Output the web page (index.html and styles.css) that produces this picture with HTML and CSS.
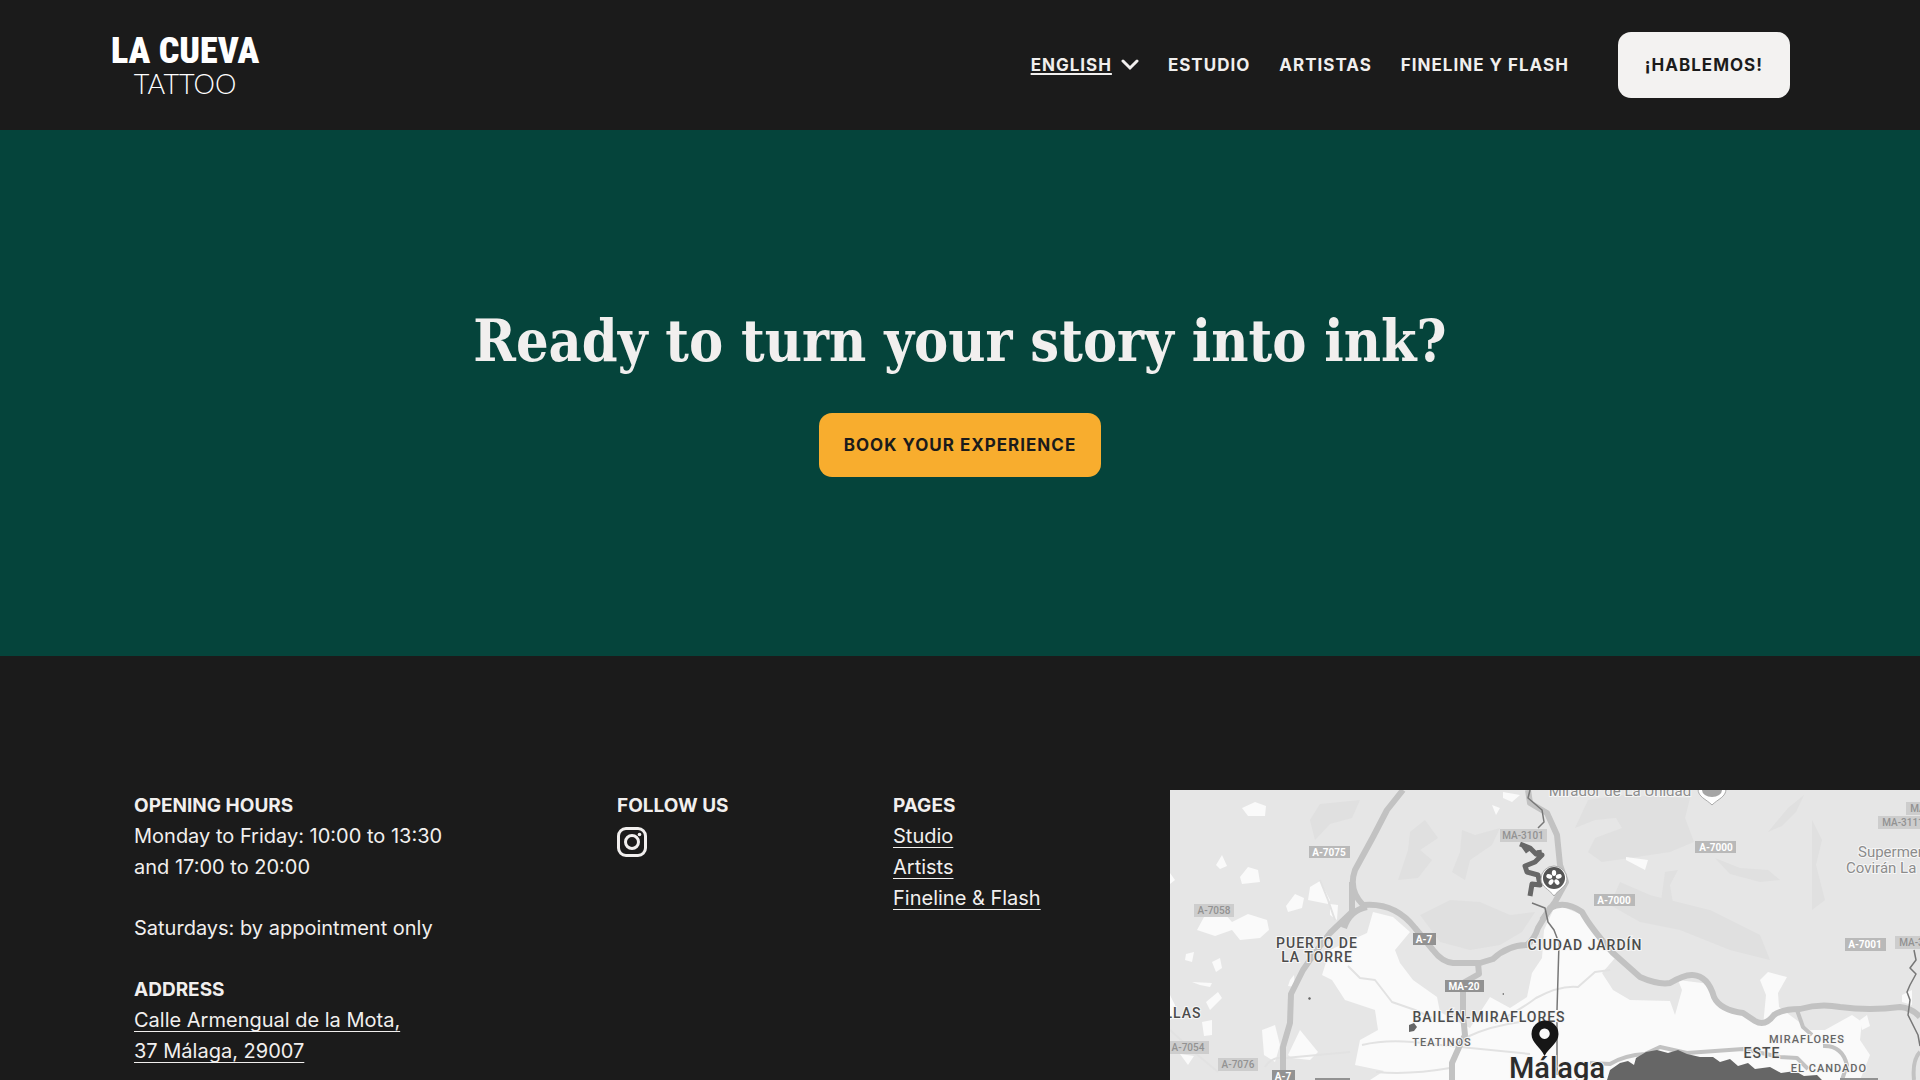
FILE: index.html
```html
<!DOCTYPE html>
<html lang="en">
<head>
  <meta charset="UTF-8" />
  <meta name="viewport" content="width=device-width, initial-scale=1" />
  <title>La Cueva Tattoo</title>
  <link rel="stylesheet" href="styles.css">
</head>
<body>

  <header class="header">
    <a class="logo" href="#">
      <span class="logo-name">LA CUEVA</span>
      <span class="logo-sub">TATTOO</span>
    </a>
    <nav class="nav">
      <button class="lang" type="button">
        <span>ENGLISH</span>
        <svg width="18" height="12" viewBox="0 0 18 12" aria-hidden="true"><path d="M2 2l7 7 7-7" /></svg>
      </button>
      <a href="#">ESTUDIO</a>
      <a href="#">ARTISTAS</a>
      <a href="#">FINELINE Y FLASH</a>
    </nav>
    <a class="btn btn-light" href="#">¡HABLEMOS!</a>
  </header>

  <main class="cta">
    <h1>Ready to turn your story into ink?</h1>
    <a class="btn btn-yellow" href="#">BOOK YOUR EXPERIENCE</a>
  </main>

  <footer class="footer">
    <div class="col">
      <h2>OPENING HOURS</h2>
      <p>Monday to Friday: 10:00 to 13:30<br>and 17:00 to 20:00</p>
      <p class="spaced">Saturdays: by appointment only</p>
      <h2>ADDRESS</h2>
      <p><a href="#">Calle Armengual de la Mota,<br>37 Málaga, 29007</a></p>
    </div>

    <div class="col">
      <h2>FOLLOW US</h2>
      <a class="social" href="#" aria-label="Instagram">
        <svg width="30" height="30" viewBox="0 0 30 30">
          <rect x="1.500" y="1.500" width="27" height="27" rx="7.500" />
          <circle cx="15" cy="15" r="6.500" />
          <circle class="dot" cx="22.500" cy="7.500" r="1.800" />
        </svg>
      </a>
    </div>

    <div class="col">
      <h2>PAGES</h2>
      <ul>
        <li><a href="#">Studio</a></li>
        <li><a href="#">Artists</a></li>
        <li><a href="#">Fineline &amp; Flash</a></li>
      </ul>
    </div>

    <div class="map">
      <svg viewBox="0 0 750 290" preserveAspectRatio="xMidYMin slice" role="img" aria-label="Map of Málaga">
        <rect class="land" width="750" height="290" />

        <!-- hills -->
        <g class="hills">
          <path d="M405 38L418 10 450 5 520 8 515 28 524 52 500 62 460 68 432 72 418 62 425 48 452 38 446 28 425 30z" />
          <path d="M292 40L305 45 330 38 322 55 300 70 295 90 282 82 290 62z" />
          <path d="M545 68L570 78 598 80 610 90 590 92 560 84z" />
          <path d="M495 82L508 80 500 95 505 125 490 118z" />
          <path d="M634 5L626 22 612 36 598 42 618 18z" />
          <path d="M642 30L652 50 646 75 655 110 642 120z" />
          <path d="M255 30L268 48 250 60 262 70 248 88 228 90 238 60 240 42z" />
          <path d="M450 92L480 105 540 120 590 145 600 170 560 160 510 140 470 132 440 115z" />
          <path d="M250 125L280 110 310 112 340 125 365 122 352 142 330 155 300 160 270 152z" />
          <path d="M150 14L190 10 182 28 160 34 145 50 140 30z" />
        </g>

        <!-- built-up areas -->
        <g class="town">
          <path d="M197 143L203 122 223 127 240 142 225 160 230 173 243 190 267 207 270 222 300 238 320 207 340 218 357 207 362 183 372 168 374 140 386 114 410 124 425 145 445 168 432 183 443 200 460 210 500 211 505 225 512 200 508 190 540 194 555 220 575 224 593 236 596 205 590 190 598 182 617 187 608 203 609 217 640 240 655 240 682 225 692 232 690 250 700 265 690 290 200 290 214 281 185 275 190 250 208 240 205 220 175 210 162 190 152 185 160 160z" />
          <path d="M27 140L34 127 55 124 62 132 78 124 97 130 99 140 90 148 70 150 62 140 45 146z" />
          <path d="M72 18L85 12 96 16 95 26 78 26zM46 75L52 65 57 76 50 79zM70 87L78 77 88 80 90 92 72 94zM116 116L125 104 134 108 132 118 118 122zM140 97L150 91 160 110 158 114 138 110zM160 114L168 115 167 130 160 125z" />
          <path d="M92 240L105 235 110 255 105 272 94 265zM118 265L130 240 148 262 140 270 122 268zM16 164L24 162 22 172 15 170zM42 172L50 168 52 178 46 182zM22 192L42 193 40 197 30 195zM36 212L48 202 52 208 40 220zM120 190L124 185 125 197 118 196zM0 205L5 215 3 228 0 230zM32 232L42 230 42 245 34 246zM10 264L24 266 18 275z" />
          <path d="M456 67L478 70 475 80 456 70zM333 2L350 5 342 12 333 8zM322 15L330 18 326 25zM0 83L5 90 0 94z" />
          <path d="M690 230L697 225 700 236 692 240zM732 205L742 200 742 215 732 212z" />
        </g>

        <!-- minor streets -->
        <g class="street">
          <path d="M178 176L190 188 205 190 222 212 245 220 262 228 M95 277Q102 266 115 268L180 262 M325 233Q350 220 366 208Q390 195 408 197L425 182 440 180 M297 247Q320 236 350 232 M192 255Q220 248 260 254L360 264 M206 282Q240 285 280 278 M0 240L24 262 48 282 M150 90L158 110 165 130" />
        </g>

        <!-- main roads -->
        <g class="road">
          <path d="M233 0L217 20 203 47 185 80Q178 100 193 115Q225 112 245 138L263 160Q272 172 283 173L310 173 323 169Q338 155 357 155Q365 148 368 138L380 118Q395 110 412 122Q420 137 443 163L470 187Q488 195 500 193Q515 184 523 185Q538 186 544 207Q550 220 573 223L585 231Q595 237 604 225Q612 219 630 219Q650 213 670 217Q700 221 730 217Q742 218 750 227" />
          <path d="M358 0L360 13 377 23 387 45 390 75 396 92 385 112 372 130" />
          <path d="M182 92L182 122 160 143Q148 158 133 180L121 204 120 233 113 257 113 290 M197 117Q180 120 174 138" />
          <path d="M308 173L309 184 293 193 293 225 295 245 290 255 282 273 282 290" />
          <path class="thin" d="M420 273L440 274Q455 265 475 264L490 257 517 263 573 259 610 267 627 268 638 279 M627 220L633 237 642 245 M653 256Q672 255 677 275L672 290 M750 262Q742 270 744 290" />
        </g>

        <!-- railway and streams -->
        <g class="rail">
          <path d="M362 113L375 118 378 132 384 140 389 153 387 220 M387 232L387 285" />
          <path d="M360 0L358 8 372 20 374 32 368 38 M744 160L746 170 740 178 746 184 740 195 737 202 740 210 738 225 748 245 750 256" />
        </g>
        <path class="river" d="M350 54L360 58 366 64 372 65 365 72 355 76 357 82 368 85 370 95 362 94 360 106 M353 55L358 62 M369 60L370 67" />
        <path class="sea" d="M437 290L440 280 450 273 458 271 464 275 466 268 476 262 487 260 498 263 508 260 517 264 530 267 543 267 550 272 560 269 568 276 578 273 585 279 600 277 611 283 625 281 634 286 647 285 652 290z" />
        <path class="river-dot" d="M239 235l5-2 3 4-3 4-5 1zM138 208l2-1 1 2-2 1zM54 272l-2 2h4zM332 204l2-1v2z" />

        <!-- road numbers -->
        <g class="shield">
          <rect x="139" y="56" width="41" height="12" /><text x="159" y="66">A-7075</text>
          <rect x="525" y="51" width="41" height="12" /><text x="546" y="61">A-7000</text>
          <rect x="424" y="104" width="41" height="12" /><text x="444" y="114">A-7000</text>
          <rect x="675" y="148" width="41" height="13" /><text x="695" y="158">A-7001</text>
        </g>
        <g class="shield dark">
          <rect x="243" y="143" width="23" height="12" /><text x="254" y="153">A-7</text>
          <rect x="275" y="190" width="39" height="12" /><text x="294" y="200">MA-20</text>
          <rect x="102" y="280" width="23" height="12" /><text x="113" y="290">A-7</text>
          <rect x="145" y="288" width="35" height="4" />
          <rect x="670" y="288" width="38" height="4" />
        </g>
        <g class="shield pale">
          <rect x="24" y="114" width="40" height="13" /><text x="44" y="124">A-7058</text>
          <rect x="-2" y="251" width="41" height="13" /><text x="18" y="261">A-7054</text>
          <rect x="48" y="268" width="40" height="13" /><text x="68" y="278">A-7076</text>
          <rect x="330" y="39" width="47" height="13" /><text x="353" y="49">MA-3101</text>
          <rect x="708" y="26" width="50" height="13" /><text x="733" y="36">MA-3111</text>
          <rect x="736" y="12" width="50" height="13" /><text x="761" y="22">MA-3111</text>
          <rect x="725" y="146" width="50" height="13" /><text x="750" y="156">MA-3111</text>
        </g>

        <!-- place names -->
        <g class="place">
          <text x="147" y="158">PUERTO DE</text>
          <text x="147" y="172">LA TORRE</text>
          <text x="415" y="160">CIUDAD JARDÍN</text>
          <text x="319" y="232">BAILÉN-MIRAFLORES</text>
          <text x="13" y="228">LLAS</text>
          <text x="592" y="268">ESTE</text>
          <text class="small" x="272" y="256">TEATINOS</text>
          <text class="small" x="637" y="253">MIRAFLORES</text>
          <text class="small" x="659" y="282">EL CANDADO</text>
        </g>
        <g class="poi">
          <text x="450" y="6">Mirador de La Unidad</text>
          <text x="688" y="67">Supermercado</text>
          <text x="676" y="83">Covirán La Mosca</text>
        </g>

        <!-- markers -->
        <path class="pin-white" d="M528 -1a14 14 0 0 1 28 0c0 8-8 10-14 16-6-6-14-8-14-16z" />
        <path class="pin-grey" d="M532 0h20a10 7 0 0 1-20 0z" />
        <path class="pin-white" d="M371 89a13 13 0 0 1 26 0c0 8-8 10-13 17-5-7-13-9-13-17z" />
        <circle class="pin-disc" cx="384" cy="88" r="11" />
        <g class="flower">
          <ellipse cx="384" cy="83" rx="2.200" ry="3" />
          <ellipse cx="384" cy="83" rx="2.200" ry="3" transform="rotate(72 384 88)" />
          <ellipse cx="384" cy="83" rx="2.200" ry="3" transform="rotate(144 384 88)" />
          <ellipse cx="384" cy="83" rx="2.200" ry="3" transform="rotate(216 384 88)" />
          <ellipse cx="384" cy="83" rx="2.200" ry="3" transform="rotate(288 384 88)" />
        </g>
        <text class="city" x="387" y="288">Málaga</text>
        <path class="pin" fill-rule="evenodd" d="M374.500 266c-4-9-13-13-13-22a13.500 13.500 0 0 1 27 0c0 9-9 13-14 22zM374.500 238.500a5.200 5.200 0 1 0 .1 0z" />
      </svg>
    </div>
  </footer>

</body>
</html>
```
FILE: styles.css
```css
* {
  box-sizing: border-box;
}

body {
  margin: 0;
  min-height: 100vh;
  background-color: #1b1b1b;
  color: #f1efee;
  font-family: Inter, "Open Sans", sans-serif;
  font-size: 20px;
  line-height: 31px;
}

h1, h2, p, ul {
  margin: 0;
  padding: 0;
}

a {
  color: inherit;
}

/* header */
.header {
  display: flex;
  align-items: center;
  padding: 32px 130px 32px 111px;
}

.logo {
  display: flex;
  flex-direction: column;
  align-items: center;
  margin-right: auto;
  color: #fff;
  text-decoration: none;
}

.logo-name {
  font-family: "Roboto Condensed", Roboto, sans-serif;
  font-size: 36px;
  font-weight: 900;
  line-height: 38px;
}

.logo-sub {
  font-family: Lato, sans-serif;
  font-size: 27px;
  font-weight: 300;
  line-height: 28px;
}

.nav {
  display: flex;
  align-items: center;
  gap: 29px;
  margin-right: 49px;
}

.nav a,
.lang,
.btn {
  font-size: 17px;
  font-weight: 700;
  letter-spacing: 1px;
  line-height: 26px;
  text-decoration: none;
}

.lang {
  display: flex;
  align-items: center;
  gap: 9px;
  padding: 0;
  border: 0;
  background: none;
  color: inherit;
  font-family: inherit;
  cursor: pointer;
}

.lang span {
  text-decoration: underline;
  text-decoration-thickness: 2px;
  text-underline-offset: 2px;
}

.lang path {
  fill: none;
  stroke: #f1efee;
  stroke-width: 3;
  stroke-linecap: round;
}

.btn {
  padding: 20px 27px;
  border-radius: 13px;
  color: #1b1b1b;
}

.btn-light {
  background-color: #f3f2f1;
}

.btn-yellow {
  padding: 19px 25px;
  background-color: #f8ad2e;
}

/* call to action */
.cta {
  display: flex;
  flex-direction: column;
  align-items: center;
  gap: 32px;
  padding: 171px 40px 179px;
  background-color: #05443b;
}

.cta h1 {
  font-family: "DejaVu Serif Condensed", "DejaVu Serif", serif;
  font-size: 57px;
  font-weight: bold;
  line-height: 80px;
  text-align: center;
}

/* footer */
.footer {
  display: grid;
  grid-template-columns: 483fr 276fr 277fr 750fr;
  padding: 134px 0 0 134px;
}

.col h2 {
  font-size: 19px;
  font-weight: 700;
  line-height: inherit;
}

.col ul {
  list-style: none;
}

.col p a,
.col li a {
  text-decoration-thickness: 1px;
  text-underline-offset: 4px;
}

.spaced {
  margin: 30px 0;
}

.social {
  display: inline-block;
  padding-top: 6px;
  line-height: 0;
}

.social svg {
  fill: none;
  stroke: #f1efee;
  stroke-width: 3;
}

.social .dot {
  fill: #f1efee;
  stroke: none;
}

/* map */
.map svg {
  display: block;
  width: 100%;
}

.land { fill: #e6e6e6; }
.hills { fill: #e0e0e0; }
.town { fill: #fafafa; }
.sea, .river-dot { fill: #666; }

.street,
.road,
.rail,
.river {
  fill: none;
  stroke-linejoin: round;
}

.street {
  stroke: #e2e2e2;
  stroke-width: 2;
}

.road {
  stroke: #c2c2c2;
  stroke-width: 6;
}

.road .thin {
  stroke-width: 4;
}

.rail {
  stroke: #777;
  stroke-width: 1.5;
}

.river {
  stroke: #686868;
  stroke-width: 5;
}

.map text {
  font-family: Roboto, sans-serif;
  text-anchor: middle;
}

.shield rect { fill: #b9b9b9; }
.shield text {
  fill: #fff;
  font-size: 10px;
  font-weight: 700;
}

.shield.dark rect { fill: #929292; }
.shield.pale rect { fill: #cdcdcd; }
.shield.pale text {
  fill: #929292;
  font-weight: 500;
}

.place text,
.poi text,
.city {
  paint-order: stroke;
  stroke: #f6f6f6;
  stroke-width: 2;
}

.place text {
  fill: #4c4c4c;
  font-size: 14px;
  font-weight: 500;
  letter-spacing: 1px;
}

.place .small {
  fill: #666;
  font-size: 11px;
}

.map .poi text {
  fill: #8c8c8c;
  font-size: 15px;
}

.map .poi text + text {
  text-anchor: start;
}

.city {
  fill: #2c2c2c;
  font-size: 29px;
  font-weight: 500;
}

.pin { fill: #161616; }
.pin-white { fill: #fff; stroke: #aaa; stroke-width: 1; }
.pin-grey { fill: #a5a5a5; }
.pin-disc { fill: #555; }
.flower { fill: #fff; }
```
